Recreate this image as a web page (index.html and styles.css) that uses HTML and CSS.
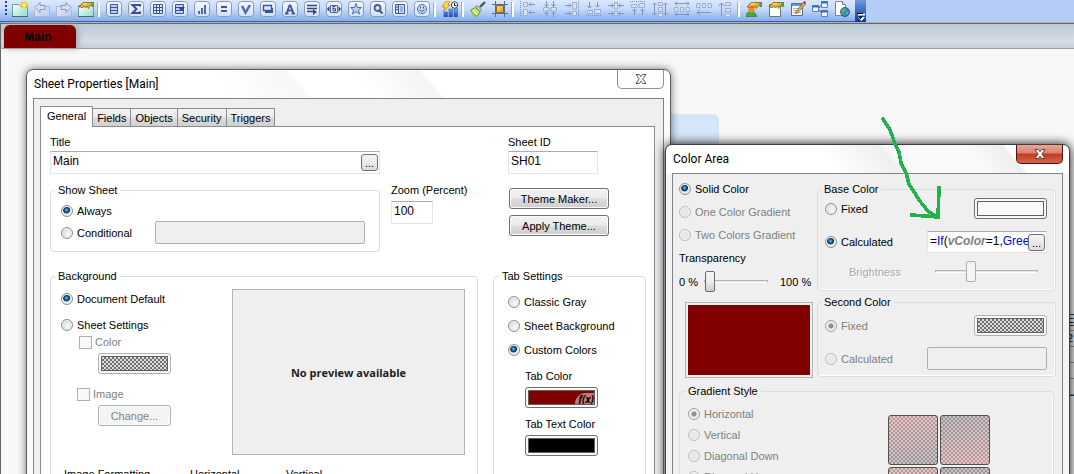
FILE: index.html
```html
<!DOCTYPE html>
<html lang="en">
<head>
<meta charset="utf-8">
<title>Sheet Properties</title>
<link rel="stylesheet" href="styles.css">
</head>
<body>
<svg class="defs" aria-hidden="true">
  <defs>
    <linearGradient id="face" x1="0" y1="0" x2="0" y2="1"><stop offset="0" stop-color="#f4f8fe"/><stop offset="1" stop-color="#d3e0f4"/></linearGradient>
    <linearGradient id="teal" x1="0" y1="0" x2="1" y2="1"><stop offset="0" stop-color="#fff"/><stop offset="1" stop-color="#8edccb"/></linearGradient>
    <linearGradient id="blue" x1="0" y1="0" x2="0" y2="1"><stop offset="0" stop-color="#7fb2f2"/><stop offset="1" stop-color="#1746b4"/></linearGradient>
    <linearGradient id="gold" x1="0" y1="0" x2="1" y2="1"><stop offset="0" stop-color="#ffe27a"/><stop offset="1" stop-color="#e89312"/></linearGradient>
    <linearGradient id="ghost" x1="0" y1="0" x2="1" y2="1"><stop offset="0" stop-color="#e3ebf8"/><stop offset="1" stop-color="#bccbe6"/></linearGradient>
    <symbol id="tile" viewBox="0 0 16 16"><rect x=".5" y=".5" width="15" height="15" rx="3" fill="url(#face)" stroke="#8a98b4"/></symbol>
    <symbol id="hand" viewBox="0 0 16 16"><path d="M1 6L5 1.500H13L15 2V5L12 4.500L10.500 7.500L9 5L7.500 7L6 5L4 7L3 6Z" fill="#e3b52d" stroke="#8b5b0c" stroke-width=".8"/><path d="M13 1H16V6H14Z" fill="#4c9b4b"/><path d="M5 3L9 2.500" stroke="#fff0a0"/></symbol>
  </defs>
</svg>

<header class="toolbar">
  <div class="tools">
    <span class="grip"></span>
    <button class="tool" aria-label="New sheet"><svg viewBox="0 0 16 16"><path d="M.5 3.500H7L9 5.500H15.500V15.500H.5Z" fill="url(#teal)" stroke="#6a9fa4"/><path d="M0 15.500H16" stroke="#2f7770"/><path d="M12 0V8M8 4H16M9 1L15 7M15 1L9 7" stroke="#f4c61d" stroke-width="1.400"/><circle cx="12" cy="4" r="1.600" fill="#fff6a8"/></svg></button>
    <button class="tool" aria-label="Previous"><svg viewBox="0 0 16 16"><path d="M3.500 5.500H15.500V15.500H.5V9" fill="url(#ghost)" stroke="#aab7d2"/><path d="M1 6.500L6 1.500V4.500H11V8.500H6V11.500Z" fill="#d6e0f2" stroke="#8796bd"/></svg></button>
    <button class="tool" aria-label="Next"><svg viewBox="0 0 16 16"><path d="M12.500 5.500H.5V15.500H15.500V9" fill="url(#ghost)" stroke="#aab7d2"/><path d="M15 6.500L10 1.500V4.500H5V8.500H10V11.500Z" fill="#d6e0f2" stroke="#8796bd"/></svg></button>
    <button class="tool" aria-label="Sheet properties"><svg viewBox="0 0 16 16"><path d="M.5 4.500H15.500V15.500H.5Z" fill="url(#teal)" stroke="#6a9fa4"/><path d="M0 15.500H16" stroke="#2f7770"/><use href="#hand"/></svg></button>
    <span class="sep"></span>
    <button class="tool" aria-label="List box"><svg viewBox="0 0 16 16"><use href="#tile"/><path d="M4.500 3.500H11.500V12.500H4.500ZM5 6.500H11M5 9.500H11" fill="#bdd0f3" stroke="#3853a0"/></svg></button>
    <button class="tool" aria-label="Statistics box"><svg viewBox="0 0 16 16"><use href="#tile"/><path d="M12 5.500V4H4.500L8.500 8L4.500 12H12V10.500" fill="none" stroke="#3950a2" stroke-width="2"/></svg></button>
    <button class="tool" aria-label="Table box"><svg viewBox="0 0 16 16"><use href="#tile"/><path d="M3.500 3.500H12.500V12.500H3.500ZM6.500 3V13M9.500 3V13M3 6.500H13M3 9.500H13" fill="#dce7fb" stroke="#3853a0"/></svg></button>
    <button class="tool" aria-label="Multi box"><svg viewBox="0 0 16 16"><use href="#tile"/><path d="M3.500 3.500H11.500V12.500H3.500ZM4 6.500H8M4 9.500H11" fill="#bdd0f3" stroke="#3853a0"/><path d="M6 6H13L9.500 10Z" fill="#2b428f"/></svg></button>
    <button class="tool" aria-label="Chart"><svg viewBox="0 0 16 16"><use href="#tile"/><path d="M4 10H6V13H4ZM7 7H9V13H7ZM10 4H12V13H10Z" fill="#4868b8"/></svg></button>
    <button class="tool" aria-label="Input box"><svg viewBox="0 0 16 16"><use href="#tile"/><path d="M5 5H11V7H5ZM5 9H11V11H5Z" fill="#3f568f"/></svg></button>
    <button class="tool" aria-label="Current selections"><svg viewBox="0 0 16 16"><use href="#tile"/><path d="M4 5L7.500 11.500L12 4" fill="none" stroke="#4c63b5" stroke-width="2.400"/></svg></button>
    <button class="tool" aria-label="Button"><svg viewBox="0 0 16 16"><use href="#tile"/><path d="M5 7H13V12H5Z" fill="#3c55a2"/><path d="M3.500 4.500H11.500V9.500H3.500Z" fill="#dfe9fb" stroke="#3c55a2" stroke-width="1.400"/></svg></button>
    <button class="tool" aria-label="Text object"><svg viewBox="0 0 16 16"><use href="#tile"/><path d="M4.500 12.500L7.500 4.500H8.500L11.500 12.500M6 9.500H10M3 12.500H6.500M9.500 12.500H13" fill="none" stroke="#4055a4" stroke-width="1.800"/></svg></button>
    <button class="tool" aria-label="Line or arrow"><svg viewBox="0 0 16 16"><use href="#tile"/><path d="M3 4.500H13M3 7.500H13M3 10.500H11" stroke="#34457f" stroke-width="1.400"/><path d="M9 8L13 11L9 14Z" fill="#34457f"/></svg></button>
    <button class="tool" aria-label="Slider or calendar"><svg viewBox="0 0 16 16"><use href="#tile"/><path d="M1 8L3.500 5V11ZM15 8L12.500 5V11Z" fill="#34457f"/><path d="M4.500 4.500H11.500V11.500H4.500Z" fill="#e6effc" stroke="#50679f"/><path d="M9.500 5.500H7V10H9.500V7.700H7" fill="none" stroke="#34457f"/></svg></button>
    <button class="tool" aria-label="Bookmark"><svg viewBox="0 0 16 16"><use href="#tile"/><path d="M8 2.500L9.500 6.500H13.500L10.500 9L11.500 13L8 10.600L4.500 13L5.500 9L2.500 6.500H6.500Z" fill="#b4d0f3" stroke="#4d6cae"/></svg></button>
    <button class="tool" aria-label="Search object"><svg viewBox="0 0 16 16"><use href="#tile"/><circle cx="7.500" cy="7" r="3" fill="#dce8fb" stroke="#4458a2" stroke-width="1.800"/><path d="M9.500 9.500L12.500 12.500" stroke="#4458a2" stroke-width="2.200"/></svg></button>
    <button class="tool" aria-label="Container"><svg viewBox="0 0 16 16"><use href="#tile"/><path d="M3.500 3.500H12.500V12.500H3.500Z" fill="#d4e5fb" stroke="#3f568f"/><path d="M6.500 4V12M4 6H6M4 8.500H6" stroke="#3f568f"/><path d="M8 5H11V11H8Z" fill="#8db4ea"/></svg></button>
    <button class="tool" aria-label="Custom object"><svg viewBox="0 0 16 16"><use href="#tile"/><circle cx="8" cy="8" r="4.500" fill="#c9dcf7" stroke="#4b69ad"/><path d="M5.500 8.500Q8 12 10.500 8.500" fill="none" stroke="#3b559b"/><path d="M6 5.500H7V7.500H6ZM9 5.500H10V7.500H9Z" fill="#3b559b"/></svg></button>
    <span class="sep"></span>
    <button class="tool" aria-label="Quick chart"><svg viewBox="0 0 16 16"><path d="M2 11H5.500V16H2ZM7 8H10.500V16H7ZM12 7H15.500V16H12Z" fill="url(#blue)" stroke="#2c5abc" stroke-width=".6"/><path d="M4 0H8L6 4H8L1 11L3 6H0Z" fill="#ffd83a" stroke="#b98412" stroke-width=".7"/><circle cx="12.500" cy="4" r="3.200" fill="#fff" stroke="#3d4248"/><path d="M12.500 2V4.500H14.500" fill="none" stroke="#222"/></svg></button>
    <span class="sep"></span>
    <button class="tool" aria-label="Format painter"><svg viewBox="0 0 16 16"><path d="M15 1L10 6" stroke="#50545d" stroke-width="2.400"/><path d="M7 4.500L11.500 9L10 10.500L5.500 6Z" fill="#d8dbe0" stroke="#777"/><path d="M5.500 6.500L10 11L7 15.500Q3 14.500 .5 9Z" fill="#c3e86c" stroke="#6f9a2c"/><path d="M3 9L7 13" stroke="#f0fbc4"/></svg></button>
    <button class="tool" aria-label="Design grid"><svg viewBox="0 0 16 16"><path d="M3.500 0V16M12.500 0V16M0 3.500H16M0 12.500H16" stroke="#4b6ea8"/><path d="M4.500 4.500H11.500V11.500H4.500Z" fill="url(#gold)" stroke="#8f6417"/></svg></button>
    <span class="sep"></span>
    <button class="tool" aria-label="Align left"><svg class="faint" viewBox="0 0 16 16"><path d="M.5 0V16" stroke-dasharray="1 1"/><path class="box" d="M3.500 1.500H7.500V5.500H3.500ZM3.500 8.500H7.500V14.500H3.500Z"/><path d="M9 3.500H15M11 1.500L9 3.500L11 5.500M9 11.500H15M11 9.500L9 11.500L11 13.500"/></svg></button>
    <button class="tool" aria-label="Center horizontally"><svg class="faint" viewBox="0 0 16 16"><path d="M4.500 0V5M2.500 3.500L4.500 5.500L6.500 3.500M11.500 0V5M9.500 3.500L11.500 5.500L13.500 3.500M4.500 16V11M2.500 13L4.500 11L6.500 13M11.500 16V11M9.500 13L11.500 11L13.500 13"/><path class="box" d="M1.500 6.500H7V10H1.500ZM9 6.500H14.500V10H9Z"/></svg></button>
    <button class="tool" aria-label="Align right"><svg class="faint" viewBox="0 0 16 16"><path d="M14.500 0V16" stroke-dasharray="1 1"/><path class="box" d="M8.500 1.500H12.500V8H8.500ZM8.500 10.500H12.500V14.500H8.500Z"/><path d="M1 4.500H7M5 2.500L7 4.500L5 6.500M1 12.500H7M5 10.500L7 12.500L5 14.500"/></svg></button>
    <button class="tool" aria-label="Align bottom"><svg class="faint" viewBox="0 0 16 16"><path d="M0 14.500H16" stroke-dasharray="1 1"/><path class="box" d="M1.500 9.500H6.500V12.500H1.500ZM8.500 8.500H14.500V12.500H8.500Z"/><path d="M3.500 1V7M1.500 5L3.500 7L5.500 5M11.500 1V6M9.500 4L11.500 6L13.500 4"/></svg></button>
    <button class="tool" aria-label="Center vertically"><svg class="faint" viewBox="0 0 16 16"><path d="M0 4.500H5M3.500 2.500L5.500 4.500L3.500 6.500M16 4.500H11M12.500 2.500L10.500 4.500L12.500 6.500M0 12.500H5M3.500 10.500L5.500 12.500L3.500 14.500M16 12.500H11M12.500 10.500L10.500 12.500L12.500 14.500"/><path class="box" d="M6.500 1.500H9.500V8H6.500ZM6.500 10.500H9.500V14.500H6.500Z"/></svg></button>
    <button class="tool" aria-label="Align top"><svg class="faint" viewBox="0 0 16 16"><path d="M0 .5H16" stroke-dasharray="1 1"/><path class="box" d="M1.500 3.500H7V6.500H1.500ZM9 2.500H14.500V6.500H9Z"/><path d="M4.500 14V8M2.500 10L4.500 8L6.500 10M12.500 14V8M10.500 10L12.500 8L14.500 10"/></svg></button>
    <button class="tool" aria-label="Space vertically"><svg class="faint" viewBox="0 0 16 16"><path d="M2.500 2V14M.5 4L2.500 2L4.500 4M.5 12L2.500 14L4.500 12M13.500 2V14M11.500 4L13.500 2L15.500 4M11.500 12L13.500 14L15.500 12"/><path class="box" d="M6.500 1.500H10.500V4.500H6.500ZM6.500 6.500H10.500V10.500H6.500ZM6.500 12.500H10.500V15.500H6.500Z"/></svg></button>
    <button class="tool" aria-label="Space horizontally"><svg class="faint" viewBox="0 0 16 16"><path d="M1 2.500H15M3 .5L1 2.500L3 4.500M13 .5L15 2.500L13 4.500M1 13.500H15M3 11.500L1 13.500L3 15.500M13 11.500L15 13.500L13 15.500"/><path class="box" d="M.5 6.500H4V10.500H.5ZM6.500 6.500H9.500V10.500H6.500ZM12 6.500H15.500V10.500H12Z"/></svg></button>
    <button class="tool" aria-label="Adjust left"><svg class="faint" viewBox="0 0 16 16"><path class="box" d="M.5 2.500H4V6.500H.5ZM6.500 2.500H9.500V6.500H6.500ZM12 2.500H15.500V6.500H12Z"/><path d="M1 11.500H15M4 8.500L1 11.500L4 14.500"/></svg></button>
    <button class="tool" aria-label="Adjust top"><svg class="faint" viewBox="0 0 16 16"><path class="box" d="M7.500 1.500H12.500V4.500H7.500ZM7.500 7.500H12.500V10.500H7.500ZM7.500 12.500H12.500V15.500H7.500Z"/><path d="M3.500 2V15M.5 5L3.500 2L6.500 5"/></svg></button>
    <span class="sep"></span>
    <button class="tool" aria-label="User preferences"><svg viewBox="0 0 16 16"><path d="M0 15.500Q0 11 5 10.500Q10 11 10.500 15.500Z" fill="#35b13d" stroke="#19701f" stroke-width=".6"/><circle cx="5.500" cy="8.500" r="3.200" fill="#f28a2a"/><use href="#hand"/></svg></button>
    <button class="tool" aria-label="Document properties"><svg viewBox="0 0 16 16"><path d="M1.500 3.500H12.500V15.500H1.500Z" fill="#fdfefe" stroke="#6b7688"/><use href="#hand"/></svg></button>
    <button class="tool" aria-label="Edit script"><svg viewBox="0 0 16 16"><path d="M1.500 2.500H12.500V14.500H1.500Z" fill="#f4f9ff" stroke="#5c6d90"/><path d="M2 4H12" stroke="#6a94de" stroke-width="2"/><path d="M3 7.500H9M3 9.500H7M3 11.500H11" stroke="#a5b8d8"/><path d="M6 10.500L13.500 1.500L15.500 3L8 11.500L5.500 12.500Z" fill="#eab04a" stroke="#724a1b" stroke-width=".7"/><path d="M13 1L14.500 0L16 1.500L15.500 3Z" fill="#b52222"/></svg></button>
    <button class="tool" aria-label="Table viewer"><svg viewBox="0 0 16 16"><path d="M6 8L10 3.500M6 8L10 12.500" stroke="#34496f"/><path d="M.5 4.500H6.500V10.500H.5ZM9.500 .5H15.500V6.500H9.500ZM9.500 9.500H15.500V15.500H9.500Z" fill="#f2f8ff" stroke="#5e7fb8"/><path d="M0 5.500H7M9 1.500H16M9 10.500H16" stroke="#3869cb" stroke-width="2"/></svg></button>
    <button class="tool" aria-label="Web view"><svg viewBox="0 0 16 16"><path d="M1.500 .5H8.500L11.500 3.500V14.500H1.500Z" fill="#fff" stroke="#7b8799"/><path d="M8.500 .5V3.500H11.500" fill="#dbe3ee" stroke="#7b8799"/><circle cx="11" cy="11" r="4.500" fill="#3a80d8" stroke="#1b4a97" stroke-width=".8"/><path d="M8 8.500L11 7L12 9L10 11L9 13L7.500 11ZM12 11L15 10L14 13L12 14Z" fill="#61bb4c"/></svg></button>
  </div>
  <button class="overflow" aria-label="More tools"><svg viewBox="0 0 8 8"><path d="M1 1.500H8" stroke="#fff" stroke-width="2"/><path d="M1 4H8L4.500 8Z" fill="#fff"/><path d="M0 .5H6" stroke="#000"/><path d="M1 3.500H6L3.500 6Z" fill="#000"/></svg></button>
</header>

<nav class="sheetbar"><a class="sheet-tab" href="#main">Main</a></nav>

<main class="desktop" id="main">
  <div class="sheet-object"></div>
  <div class="table-object"><span>E</span><span>2</span><span></span><span></span><span></span></div>

  <section class="window properties">
    <header class="titlebar">
      <h1 class="title">Sheet Properties [Main]</h1>
      <button class="close" aria-label="Close"><svg viewBox="0 0 12 10"><path d="M1 .5H4.200L6 2.800L7.800 .5H11L7.800 5L11 9.500H7.800L6 7.200L4.200 9.500H1L4.200 5Z" fill="#fff" stroke="#55575c"/></svg></button>
    </header>
    <div class="frame">
      <div class="tabs" role="tablist">
        <button class="tab active" role="tab">General</button><button class="tab" role="tab">Fields</button><button class="tab" role="tab">Objects</button><button class="tab" role="tab">Security</button><button class="tab" role="tab">Triggers</button>
      </div>
      <div class="page">
        <div class="upper">
          <div class="field">
            <label for="title">Title</label>
            <div class="combo"><input id="title" class="text" value="Main"><button class="dots">...</button></div>
          </div>
          <div class="field sheet-id"><label for="sid">Sheet ID</label><input id="sid" class="text" value="SH01"></div>
          <fieldset class="group show">
            <legend>Show Sheet</legend>
            <label class="opt"><input type="radio" name="show" checked>Always</label>
            <div class="cond"><label class="opt"><input type="radio" name="show">Conditional</label><input class="text" disabled aria-label="Condition"></div>
          </fieldset>
          <div class="field zoom"><label for="zoom">Zoom (Percent)</label><input id="zoom" class="text" value="100"></div>
          <div class="actions"><button class="btn">Theme Maker...</button><button class="btn">Apply Theme...</button></div>
        </div>
        <div class="lower">
          <fieldset class="group background">
            <legend>Background</legend>
            <div class="bg-body">
              <div class="bg-options">
                <label class="opt"><input type="radio" name="bg" checked>Document Default</label>
                <label class="opt settings"><input type="radio" name="bg">Sheet Settings</label>
                <label class="opt sub color"><input type="checkbox" disabled>Color</label>
                <button class="swatch indent" disabled aria-label="Background color"><span class="chip hatch"></span></button>
                <label class="opt sub image"><input type="checkbox" disabled>Image</label>
                <button class="btn indent" disabled>Change...</button>
              </div>
              <div class="preview">No preview available</div>
            </div>
            <div class="formats"><span>Image Formatting</span><span>Horizontal</span><span>Vertical</span></div>
          </fieldset>
          <fieldset class="group tabset">
            <legend>Tab Settings</legend>
            <label class="opt"><input type="radio" name="tabs">Classic Gray</label>
            <label class="opt"><input type="radio" name="tabs">Sheet Background</label>
            <label class="opt"><input type="radio" name="tabs" checked>Custom Colors</label>
            <div class="colors">
              <span>Tab Color</span>
              <button class="swatch" aria-label="Tab color"><span class="chip maroon"><i class="fx">f(x)</i></span></button>
              <span class="second-label">Tab Text Color</span>
              <button class="swatch" aria-label="Tab text color"><span class="chip black"></span></button>
            </div>
          </fieldset>
        </div>
      </div>
    </div>
  </section>

  <section class="window colorarea">
    <header class="titlebar">
      <h1 class="title">Color Area</h1>
      <button class="close red" aria-label="Close"><svg viewBox="0 0 12 10"><path d="M1 .5H4.200L6 2.800L7.800 .5H11L7.800 5L11 9.500H7.800L6 7.200L4.200 9.500H1L4.200 5Z" fill="#fff" stroke="#55484c"/></svg></button>
    </header>
    <div class="frame">
      <div class="columns">
        <div class="left">
          <label class="opt"><input type="radio" name="mode" checked>Solid Color</label>
          <label class="opt off"><input type="radio" name="mode" disabled>One Color Gradient</label>
          <label class="opt off"><input type="radio" name="mode" disabled>Two Colors Gradient</label>
          <label class="trans" for="trans">Transparency</label>
          <div class="range"><span>0 %</span><input id="trans" type="range" value="0"><span>100 %</span></div>
          <div class="result"></div>
        </div>
        <div class="right">
          <fieldset class="group base">
            <legend>Base Color</legend>
            <div class="row"><label class="opt"><input type="radio" name="base">Fixed</label><button class="swatch" aria-label="Base color"><span class="chip white"></span></button></div>
            <div class="row"><label class="opt"><input type="radio" name="base" checked>Calculated</label>
              <div class="combo"><div class="text formula" contenteditable="true" role="textbox" aria-label="Expression">=<b class="fn">If</b>(<b class="var">vColor</b>=1,<b class="fn">Gree</b></div><button class="dots">...</button></div></div>
            <div class="row bright"><label for="bright">Brightness</label><input id="bright" type="range" value="33" disabled></div>
          </fieldset>
          <fieldset class="group second">
            <legend>Second Color</legend>
            <div class="row"><label class="opt off"><input type="radio" name="second" checked disabled>Fixed</label><button class="swatch" disabled aria-label="Second color"><span class="chip hatch"></span></button></div>
            <div class="row calc"><label class="opt off"><input type="radio" name="second" disabled>Calculated</label><input class="text" disabled aria-label="Second expression"></div>
          </fieldset>
        </div>
      </div>
      <fieldset class="group style">
        <legend>Gradient Style</legend>
        <div class="styles">
          <label class="opt off"><input type="radio" name="gs" checked disabled>Horizontal</label>
          <label class="opt off"><input type="radio" name="gs" disabled>Vertical</label>
          <label class="opt off"><input type="radio" name="gs" disabled>Diagonal Down</label>
          <label class="opt off"><input type="radio" name="gs" disabled>Diagonal Up</label>
        </div>
        <div class="tiles"><button disabled aria-label="Variant 1"></button><button class="up" disabled aria-label="Variant 2"></button><button disabled aria-label="Variant 3"></button><button class="up" disabled aria-label="Variant 4"></button></div>
      </fieldset>
    </div>
  </section>

  <svg class="arrow" viewBox="0 0 64 104" aria-hidden="true"><path d="M3 3L6 8L9 12L12 19L15 28L19 36L21 47L26 57L29 68L36 79L42 88L49 96L57 101M59 72L58 101M32 99L58 101" fill="none" stroke="#22b14c" stroke-width="3.600" stroke-linecap="square" stroke-linejoin="round" shape-rendering="crispEdges"/></svg>
</main>
</body>
</html>
```
FILE: styles.css
```css
* { box-sizing: border-box; }
body {
  margin: 0;
  height: 100vh;
  overflow: hidden;
  display: flex;
  flex-direction: column;
  background: #f8f8f8;
  color: #000;
  font: 11px/14px "Liberation Sans", Arial, sans-serif;
}
button, input { font: inherit; color: inherit; margin: 0; }
button { padding: 0; }
.defs { position: absolute; width: 0; height: 0; }

.toolbar {
  flex: none;
  display: flex;
  height: 22px;
  background: #b4ccf6;
}
.tools {
  display: flex;
  width: 855px;
  padding-left: 5px;
  background: linear-gradient(#dbe8fc, #c4d9f9 45%, #86ace8);
  border-bottom: 1px solid #3462b0;
}
.grip {
  width: 2px;
  height: 15px;
  margin: 1px 2px 0 0;
  background: repeating-linear-gradient(#27407f 0 2px, transparent 2px 4px);
}
.tool { width: 22px; flex: none; height: 18px; border: 0; background: none; padding: 1px 3px; }
.tool svg { display: block; width: 16px; height: 16px; }
.faint path { fill: none; stroke: #7d92c4; }
.faint .box { fill: #d5e0f3; stroke: #a0aecb; }
.sep { width: 6px; flex: none; height: 15px; border-right: 2px solid #fff; background: linear-gradient(90deg, transparent 3px, #8ea9da 3px); background-clip: padding-box; margin: 2px 3px 0 -3px; }
.overflow {
  width: 11px;
  border: 0;
  padding: 11px 1px 0 2px;
  background: linear-gradient(#6c98e6, #0b3a98);
}
.overflow svg { display: block; width: 8px; height: 8px; }

.sheetbar {
  flex: none;
  display: flex;
  align-items: flex-end;
  height: 27px;
  padding-left: 3px;
  border-top: 1px solid #b0b0ac;
  border-left: 1px solid #666;
  box-shadow: inset 0 1px #686868;
  border-bottom: 1px solid #9c9fa2;
  background: linear-gradient(#b9c8d3, #d6dde5 75%, #c6ccd2);
}
.sheet-tab {
  width: 72px;
  height: 23px;
  border-radius: 6px 6px 0 0;
  background: #800000;
  color: #000;
  font: bold 12px/25px "Liberation Sans", sans-serif;
  text-align: center;
  text-decoration: none;
  padding-right: 4px;
  box-shadow: 2px 0 6px #99a4ae;
}

.desktop { position: relative; flex: 1; border-left: 1px solid #666; }
.sheet-object {
  position: absolute;
  left: 600px;
  top: 65px;
  width: 118px;
  height: 90px;
  border-radius: 6px;
  background: #d4e6f7;
}
.table-object {
  position: absolute;
  right: 0;
  top: 265px;
  width: 10px;
  border: solid #0f4f8f;
  border-width: 1px 0;
  background: #eee;
}
.table-object span { display: block; height: 16px; padding-left: 3px; border-bottom: 1px solid #999; }

/* Windows */
.window {
  position: absolute;
  border: 1px solid #3c3e42;
  border-radius: 7px 7px 0 0;
  display: flex;
  flex-direction: column;
  padding: 0 6px;
}
.properties {
  left: 25px;
  top: 20px;
  width: 645px;
  bottom: -12px;
  border-color: #5b5d60;
  background: linear-gradient(50deg, #fff 0 30%, #f7f7f7 42%, #fff 43% 52%, #f4f4f4 62%, #fff 63%) 0 0 / 100% 29px no-repeat, #fbfbfb;
  box-shadow: 0 0 8px rgba(0, 0, 0, .55);
}
.colorarea {
  left: 664px;
  top: 95px;
  width: 405px;
  bottom: -40px;
  background: linear-gradient(50deg, #fff 0 40%, #efefef 55%, #fafafa 57% 75%, #eee 84%, #fff 85%) 0 0 / 100% 29px no-repeat, #f2f4f6;
  box-shadow: 0 0 11px rgba(0, 0, 0, .95);
}
.titlebar { display: flex; justify-content: space-between; height: 28px; flex: none; }
.title { margin: 0; padding-left: 1px; font: 12px/29px Roboto, sans-serif; }
.close {
  width: 47px;
  height: 19px;
  border: 1px solid #909296;
  border-top: 0;
  border-radius: 0 0 5px 5px;
  background: #fdfdfd;
}
.close svg { display: block; width: 12px; height: 10px; margin: 0 auto; }
.close.red { border-color: #4d1410; background: linear-gradient(#e9a598, #dc8070 45%, #c03c22 50%, #d4654a); }
.frame { flex: 1; border: 1px solid #808287; border-bottom: 0; background: #efefef; }
.properties .frame { padding: 7px 8px 0 6px; display: flex; flex-direction: column; }

.tabs { display: flex; align-items: flex-end; height: 21px; margin-bottom: -1px; flex: none; }
.tab {
  height: 19px;
  padding: 0 4px;
  border: 1px solid #8a8c93;
  border-left-width: 0;
  background: linear-gradient(#f3f3f3, #ebebeb 48%, #dcdcdc 52%, #d0d0d0);
}
.tab.active { height: 21px; padding: 0 6px 2px; border-left-width: 1px; border-bottom: 0; background: #fff; z-index: 1; }
.page { flex: 1; padding: 8px 8px 0 9px; border: 1px solid #8a8c93; background: #fff; }

/* Controls */
.field { display: flex; flex-direction: column; gap: 2px; }
.text {
  height: 23px;
  width: 100%;
  border: 1px solid #e2e3ea;
  border-top-color: #abadb3;
  background: #fff;
  padding: 0 2px 3px;
  font: 12px/18px "Liberation Sans", sans-serif;
  border-radius: 0;
}
.text:disabled { border-color: #afafaf; background: #efefef; border-radius: 2px; }
.combo { position: relative; }
.dots {
  position: absolute;
  right: 2px;
  top: 3px;
  width: 17px;
  height: 17px;
  border: 1px solid #707070;
  border-radius: 3px;
  background: linear-gradient(#f4f4f4, #ddd);
}
.btn {
  height: 21px;
  border: 1px solid #707070;
  border-radius: 3px;
  background: linear-gradient(#f2f2f2, #ebebeb 48%, #dcdcdc 52%, #cfcfcf);
  box-shadow: inset 0 0 0 1px #fafafa;
}
.btn:disabled { border-color: #adb2b5; background: #f4f4f4; color: #838383; }
.group { min-width: 0; margin: 0; padding: 0; border: 1px solid #d5dfe5; border-radius: 4px; }
.frame > .group, .columns .group { box-shadow: inset -1px -1px #fff; }
legend { margin-left: -4px; padding: 0 3px; }
.opt { display: flex; align-items: center; gap: 4px; height: 14px; white-space: nowrap; }
.opt:has(:disabled) { color: #808080; }
input[type="radio"] {
  appearance: none;
  flex: none;
  width: 12px;
  height: 12px;
  border: 1px solid #8e8f8f;
  border-radius: 50%;
  background: radial-gradient(circle at 60% 60%, #fafafa, #c8ccd0);
  box-shadow: inset 0 0 0 1px #f4f4f4;
}
input[type="radio"]:checked { background: radial-gradient(circle at 45% 40%, #7fd0f5 0, #1b6ea8 20%, #0c2d4c 38%, #dfe3e6 46%); }
input[type="radio"]:disabled { border-color: #bcbcbc; background: #e8e8e8; }
input[type="radio"]:disabled:checked { border-color: #a0a0a0; background: radial-gradient(circle, #8d8d8d 0 28%, #e8e8e8 42%); }
input[type="checkbox"] {
  appearance: none;
  flex: none;
  width: 13px;
  height: 13px;
  border: 1px solid #b1b1b1;
  background: #f8f8f8;
}
.swatch {
  display: block;
  width: 73px;
  height: 21px;
  padding: 2px;
  border: 1px solid #707070;
  border-radius: 3px;
  background: #f8f8f8;
}
.swatch:disabled { border-color: #adb2b5; }
.chip { position: relative; display: block; height: 15px; border: 1px solid #606060; overflow: hidden; }
.hatch { background: repeating-conic-gradient(#6f6f6f 0 25%, #dcdcdc 0 50%) 0 0 / 4px 4px; }
.maroon { background: #800000; }
.black { background: #000; }
.white { background: #fafafa; }
.fx {
  position: absolute;
  right: 0;
  bottom: 0;
  width: 19px;
  height: 11px;
  border-radius: 12px 0 0 0;
  background: #c07a7a;
  font: italic bold 10px/12px "Open Sans", sans-serif;
  text-align: right;
}

/* Sheet Properties */
.upper { display: grid; grid-template-columns: 330px 106px 1fr; column-gap: 11px; row-gap: 9px; align-items: start; }
.sheet-id { grid-column: 3; width: 90px; }
.upper > .field:first-child { grid-column: 1 / 2; }
.show { padding: 7px 14px 7px 10px; }
.show legend, .background legend { margin-left: -6px; }
.cond { display: flex; align-items: center; justify-content: space-between; margin-top: 3px; }
.cond .text { width: 210px; }
.zoom { gap: 4px; }
.zoom .text { width: 42px; }
.actions { display: flex; flex-direction: column; gap: 6px; padding: 5px 0 0 1px; width: 101px; }
.lower { display: flex; gap: 15px; margin-top: 17px; }
.background { flex: 1; height: 240px; padding: 6px 12px 0 10px; }
.bg-body { display: flex; justify-content: space-between; }
.bg-options { padding-top: 3px; }
.settings { margin-top: 12px; }
.sub { padding-left: 18px; gap: 3px; }
.color { margin-top: 3px; }
.image { margin-top: 13px; padding-left: 16px; }
.indent { margin: 4px 0 0 37px; width: 73px; }
.preview {
  width: 233px;
  height: 166px;
  border: 1px solid #b4b4b4;
  background: #efefef;
  color: #222;
  font: bold 11px/166px "Open Sans", sans-serif;
  text-align: center;
}
.formats { display: grid; grid-template-columns: 126px 96px 1fr; padding: 12px 0 0 3px; }
.tabset { width: 153px; padding: 12px 0 0 14px; }
.tabset legend { margin-left: -9px; }
.tabset .opt + .opt { margin-top: 10px; }
.colors { padding: 12px 0 0 17px; display: flex; flex-direction: column; gap: 4px; }
.second-label { padding-top: 5px; }

/* Color Area */
.columns { display: grid; grid-template-columns: 128px 1fr; gap: 9px; padding: 8px 6px 0 6px; }
.left .opt + .opt { margin-top: 9px; }
.trans { display: block; margin-top: 9px; }
.range { display: grid; grid-template-columns: 25px 64px 1fr; align-items: center; margin-top: 4px; height: 25px; }
.range span { white-space: nowrap; }
.range span:last-child { padding-left: 12px; }
input[type="range"] { appearance: none; background: none; width: 100%; height: 21px; }
input[type="range"]::-webkit-slider-runnable-track { height: 3px; border: 1px solid #b4b4b4; border-bottom-color: #fff; background: #e6e6e6; }
input[type="range"]::-webkit-slider-thumb {
  appearance: none;
  width: 10px;
  height: 21px;
  margin-top: -10px;
  border: 1px solid #6b6b6b;
  border-radius: 2px;
  background: linear-gradient(#f6f6f6, #eee 50%, #ccc);
}
input[type="range"]:disabled::-webkit-slider-thumb { border-color: #b0b0b0; background: #f4f4f4; }
.result { height: 76px; margin: 8px 0 0 6px; width: 128px; border: 1px solid #b4b4b4; padding: 2px; background: #800000 content-box; }
.right { padding-left: 1px; }
.right .group { padding-left: 7px; padding-right: 8px; }
.row { display: flex; justify-content: space-between; align-items: center; }
.base { padding-top: 2px; padding-bottom: 8px; }
.base .row + .row { margin-top: 12px; }
.base .combo, .calc .text { width: 120px; }
.formula { overflow: hidden; white-space: nowrap; height: 22px; }
.formula b { font-weight: normal; }
.formula .fn { color: #0000e6; }
.formula .var { color: #808080; font-weight: bold; font-style: italic; }
.base .row.bright { margin-top: 8px; padding: 0 9px 0 24px; color: #a8a8a8; text-shadow: 1px 1px #fff; }
.bright input { width: 103px; }
.second { margin-top: 4px; padding-top: 6px; padding-bottom: 6px; }
.calc { margin-top: 11px; }
.style { display: flex; justify-content: space-between; margin: 6px 8px 0 6px; padding: 9px 63px 0 8px; height: 140px; }
.style legend { margin-left: -3px; }
.styles { display: flex; flex-direction: column; gap: 7px; }
.tiles { display: grid; grid-template-columns: 50px 50px; grid-auto-rows: 50px; gap: 2px; padding-top: 8px; }
.tiles button {
  border: 1px solid #505050;
  border-radius: 3px;
  background: repeating-conic-gradient(rgba(110, 110, 110, .4) 0 25%, rgba(230, 230, 230, .4) 0 50%) 0 0 / 4px 4px, linear-gradient(170deg, #ecb4b6, #b4acad);
}
.tiles .up { background: repeating-conic-gradient(rgba(110, 110, 110, .4) 0 25%, rgba(230, 230, 230, .4) 0 50%) 0 0 / 4px 4px, linear-gradient(170deg, #b4acad, #ecb4b6); }

.arrow { position: absolute; left: 879px; top: 67px; width: 64px; height: 104px; pointer-events: none; }
```
